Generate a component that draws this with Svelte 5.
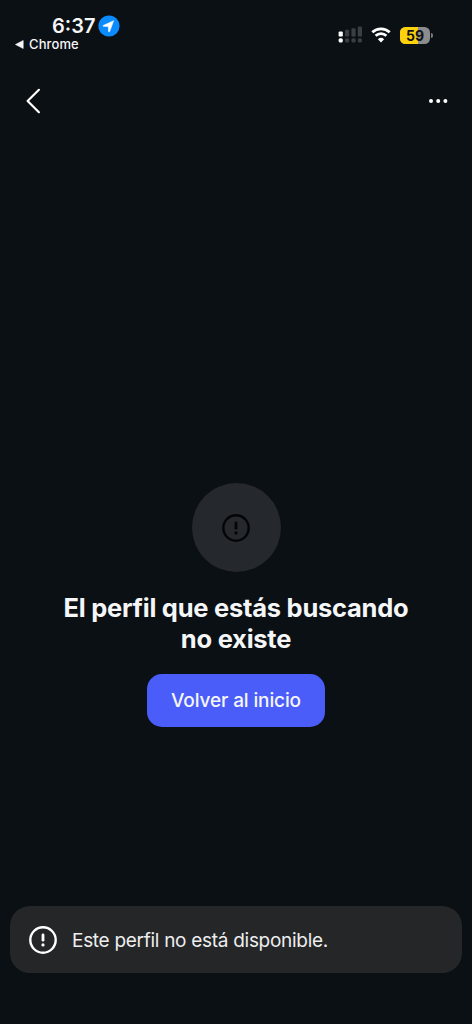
<script>
    let time = "6:37";
    let battery = 59;
    let bars = [true, false, false, false];
    let toast = "Este perfil no está disponible.";
</script>

{#snippet alertIcon(size)}
    <svg width={size} height={size} viewBox="0 0 28 28" fill="none" stroke="currentColor">
        <circle cx="14" cy="14" r="12.7" stroke-width="2.4" />
        <path d="M14 9v5.2" stroke-width="2.8" stroke-linecap="round" />
        <circle cx="14" cy="18.9" r="1.6" fill="currentColor" stroke="none" />
    </svg>
{/snippet}

<div class="screen">
    <div class="status-bar">
        <div class="status-left">
            <div class="clock">
                <span class="time">{time}</span>
                <svg width="22" height="22" viewBox="0 0 22 22">
                    <circle cx="11" cy="11" r="10.6" fill="#0a8cff" />
                    <path d="M15.6 5.8 5.3 10.4c-.5.3-.4.9.2.9l4.9.3.2 4.8c0 .6.7.7 1 .2z" fill="#fff" stroke="#fff" stroke-width=".6" stroke-linejoin="round" />
                </svg>
            </div>
            <div class="back-app">
                <svg width="9" height="9" viewBox="0 0 9 9"><path d="M.5 4.5 8.2.5v8z" fill="#f4f5f6" stroke="#f4f5f6" stroke-width=".6" stroke-linejoin="round" /></svg>
                <span>Chrome</span>
            </div>
        </div>
        <div class="status-right">
            <svg width="25" height="18" viewBox="0 0 25 18">
                {#each bars as active, i}
                    <rect x={0.6 + i * 6.4} y={5.4 - i * 1.6} width="4.2" height={5.2 + i * 1.6} rx="1.2" fill={active ? "#fff" : "#3b3e42"} />
                    <rect x={0.6 + i * 6.4} y="12.2" width="4.2" height="4.4" rx="1.6" fill={active ? "#fff" : "#3b3e42"} />
                {/each}
            </svg>
            <svg class="wifi" width="20" height="16" viewBox="0 0 20 16">
                <path d="M1.3 5.3a12.6 12.6 0 0 1 17.4 0" fill="none" stroke="#fff" stroke-width="2.8" />
                <path d="M4.6 8.8a7.9 7.9 0 0 1 10.8 0" fill="none" stroke="#fff" stroke-width="2.7" />
                <path d="M10 15.4 6.9 12.2a4.5 4.5 0 0 1 6.2 0z" fill="#fff" />
            </svg>
            <div class="battery">
                <div class="cell">
                    <div class="level" style="width: {battery}%"></div>
                    <span>{battery}</span>
                </div>
                <div class="cap"></div>
            </div>
        </div>
    </div>

    <div class="nav">
        <button class="icon-button" aria-label="Atrás">
            <svg width="15" height="26" viewBox="0 0 15 26"><path d="M12.9 1.8 1.6 13l11.3 11.2" fill="none" stroke="#fff" stroke-width="2.2" stroke-linecap="round" stroke-linejoin="round" /></svg>
        </button>
        <button class="icon-button" aria-label="Más">
            <svg width="20" height="6" viewBox="0 0 20 6" fill="#fff">
                <circle cx="3" cy="3" r="2" />
                <circle cx="10.2" cy="3" r="2" />
                <circle cx="17.4" cy="3" r="2" />
            </svg>
        </button>
    </div>

    <div class="content">
        <div class="badge">{@render alertIcon(28)}</div>
        <h1>El perfil que estás buscando<br />no existe</h1>
        <button class="home-button">Volver al inicio</button>
    </div>

    <div class="toast">
        {@render alertIcon(28)}
        <span>{toast}</span>
    </div>
</div>

<style>
    :global(body) {
        background: #0b1014;
    }

    .screen {
        height: 1024px;
        box-sizing: border-box;
        display: flex;
        flex-direction: column;
        background: #0b1014;
        color: #f5f6f8;
        font-family: Inter, "Liberation Sans", sans-serif;
    }

    svg {
        display: block;
        flex-shrink: 0;
    }

    button {
        border: none;
        padding: 0;
        font-family: inherit;
        color: inherit;
        cursor: pointer;
    }

    .status-bar {
        height: 60px;
        display: flex;
        justify-content: space-between;
        box-sizing: border-box;
        padding: 15px 39px 0 15px;
    }

    .clock {
        display: flex;
        align-items: center;
        height: 22px;
        padding-left: 37px;
        gap: 2px;
    }

    .time {
        width: 44px;
        font-size: 20px;
        font-weight: 600;
        white-space: nowrap;
    }

    .back-app {
        display: flex;
        align-items: center;
        height: 14px;
        gap: 5px;
        font-size: 13px;
        font-weight: 500;
        letter-spacing: 0.1px;
    }

    .status-right {
        display: flex;
        align-items: center;
        height: 18px;
        padding-top: 11px;
    }

    .wifi {
        margin: 0 9px 0 8px;
    }

    .battery {
        display: flex;
        align-items: center;
        gap: 1px;
    }

    .cell {
        position: relative;
        width: 30px;
        height: 17px;
        border-radius: 5.5px;
        overflow: hidden;
        background: #8b8c8e;
    }

    .level {
        height: 100%;
        background: #fbd20b;
    }

    .cell span {
        position: absolute;
        inset: 0;
        color: #101214;
        font-size: 14px;
        font-weight: 700;
        line-height: 17px;
        text-align: center;
    }

    .cap {
        width: 2px;
        height: 5px;
        border-radius: 0 2px 2px 0;
        background: #77797b;
    }

    .nav {
        height: 82px;
        display: flex;
        align-items: center;
        justify-content: space-between;
        box-sizing: border-box;
        padding: 0 24px 0 26px;
    }

    .icon-button {
        background: none;
    }

    .content {
        flex: 1;
        display: flex;
        flex-direction: column;
        align-items: center;
        padding-top: 341px;
    }

    .badge {
        width: 89px;
        height: 89px;
        display: flex;
        align-items: center;
        justify-content: center;
        border-radius: 50%;
        background: #25282c;
        color: #030506;
    }

    h1 {
        margin: 20px 0;
        font-size: 25.5px;
        font-weight: 700;
        line-height: 31px;
        letter-spacing: -0.25px;
        text-align: center;
        white-space: nowrap;
    }

    .home-button {
        width: 178px;
        height: 53px;
        border-radius: 15px;
        background: #4a5df9;
        font-size: 19px;
        font-weight: 500;
        letter-spacing: -0.12px;
        white-space: nowrap;
    }

    .toast {
        height: 67px;
        display: flex;
        align-items: center;
        gap: 15px;
        box-sizing: border-box;
        margin: 0 10px 51px;
        padding-left: 19px;
        border-radius: 20px;
        background: #252628;
        font-size: 19px;
        letter-spacing: -0.29px;
        color: #fff;
    }

    .toast span {
        padding-top: 1px;
        color: #eeeeef;
        white-space: nowrap;
    }
</style>
